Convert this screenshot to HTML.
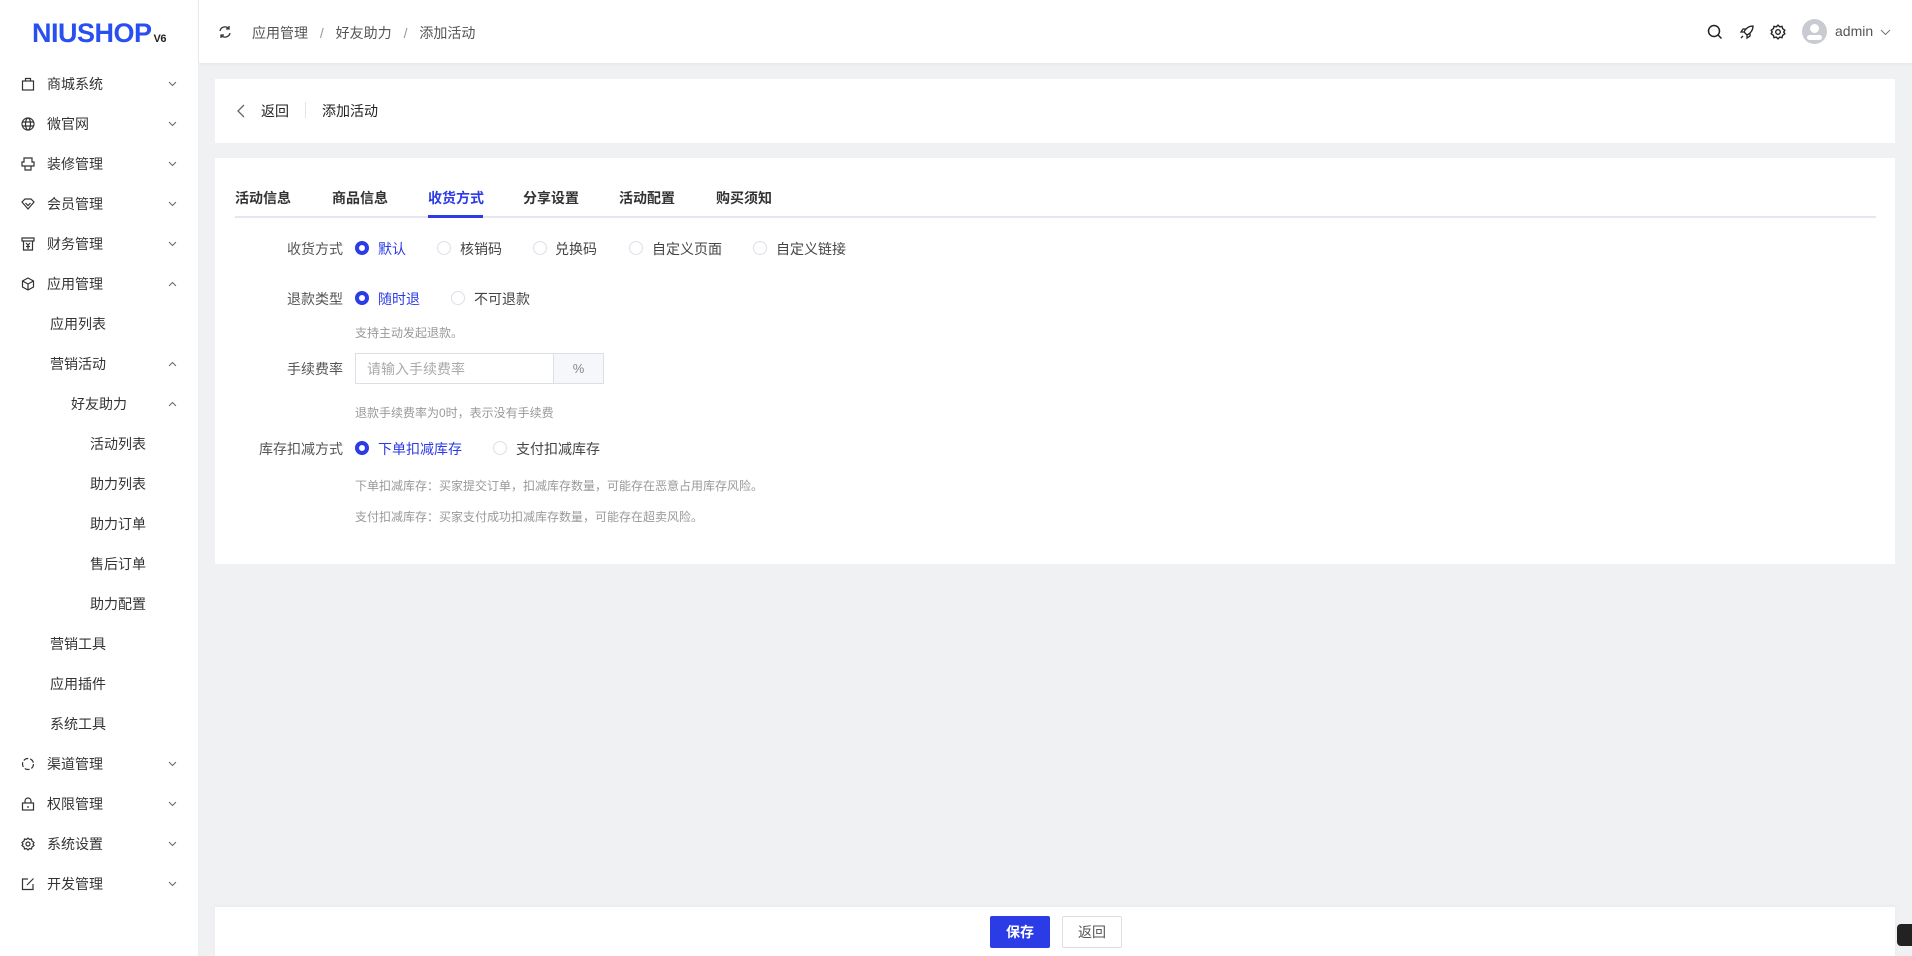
<!DOCTYPE html>
<html><head><meta charset="utf-8"><style>
*{box-sizing:border-box;margin:0;padding:0}
body{width:1912px;height:956px;background:#f0f1f3;font-family:"Liberation Sans","Noto Sans CJK SC",sans-serif;color:#333;position:relative;overflow:hidden;font-size:14px}
.abs{position:absolute}
.side{left:0;top:0;width:199px;height:956px;background:#fff;border-right:1px solid #eceef2}
.logo{left:32px;top:18px;font-size:27px;font-weight:bold;color:#2a4ff0;letter-spacing:-0.5px;font-family:"Liberation Sans",sans-serif}
.logo small{font-size:11px;color:#222;margin-left:2px}
.it{position:absolute;left:0;width:199px;height:40px;line-height:40px;font-size:14px;color:#333}
.it svg.ic{position:absolute;left:21px;top:13px}
.it .ch{position:absolute;left:168px;top:17px}
.hdr{left:199px;top:0;width:1713px;height:63px;background:#fff;box-shadow:0 1px 4px rgba(0,0,0,.05)}
.card{background:#fff;position:absolute;left:215px;width:1680px}
.lbl{position:absolute;width:200px;left:143px;text-align:right;font-size:14px;color:#555}
.rd{position:absolute;width:14px;height:14px;border-radius:50%;border:1px solid #dcdfe6;background:#fff}
.rd.on{border:4px solid #2b3be6}
.rt{position:absolute;font-size:14px;color:#444}
.rt.on{color:#2b3be6}
.hint{position:absolute;left:355px;font-size:12px;color:#999}
.tab{position:absolute;top:188px;font-size:14px;font-weight:bold;color:#333}
</style></head><body>
<div class="abs side">
<div class="abs logo">NIUSHOP<small>V6</small></div>
</div>
<!-- sidebar items -->
<div class="it" style="top:64px"><svg class="ic" width="14" height="14" viewBox="0 0 14 14" fill="none" stroke="#333" stroke-width="1.2"><rect x="1.5" y="4" width="11" height="9"/><path d="M4.5 4V1.5h5V4"/></svg><span style="margin-left:47px">商城系统</span><svg class="ch" width="9" height="6" viewBox="0 0 9 6" fill="none" stroke="#666"><path d="M1 1l3.5 3.5L8 1"/></svg></div>
<div class="it" style="top:104px"><svg class="ic" width="14" height="14" viewBox="0 0 14 14" fill="none" stroke="#333" stroke-width="1.2"><circle cx="7" cy="7" r="6"/><ellipse cx="7" cy="7" rx="2.5" ry="6"/><path d="M1 5h12M1 9h12"/></svg><span style="margin-left:47px">微官网</span><svg class="ch" width="9" height="6" viewBox="0 0 9 6" fill="none" stroke="#666"><path d="M1 1l3.5 3.5L8 1"/></svg></div>
<div class="it" style="top:144px"><svg class="ic" width="14" height="14" viewBox="0 0 14 14" fill="none" stroke="#333" stroke-width="1.2"><path d="M3 1h8v4h2v4H1V5h2zM4 9v4h6V9"/></svg><span style="margin-left:47px">装修管理</span><svg class="ch" width="9" height="6" viewBox="0 0 9 6" fill="none" stroke="#666"><path d="M1 1l3.5 3.5L8 1"/></svg></div>
<div class="it" style="top:184px"><svg class="ic" width="14" height="14" viewBox="0 0 14 14" fill="none" stroke="#333" stroke-width="1.2"><path d="M1 5l3-3h6l3 3-6 7z"/><path d="M4.5 6l2.5 2.5L9.5 6"/></svg><span style="margin-left:47px">会员管理</span><svg class="ch" width="9" height="6" viewBox="0 0 9 6" fill="none" stroke="#666"><path d="M1 1l3.5 3.5L8 1"/></svg></div>
<div class="it" style="top:224px"><svg class="ic" width="14" height="14" viewBox="0 0 14 14" fill="none" stroke="#333" stroke-width="1.2"><path d="M1 1h12v3H1zM2.5 4v9h9V4M5 6l2 2 2-2M7 8v4M5 9.5h4"/></svg><span style="margin-left:47px">财务管理</span><svg class="ch" width="9" height="6" viewBox="0 0 9 6" fill="none" stroke="#666"><path d="M1 1l3.5 3.5L8 1"/></svg></div>
<div class="it" style="top:264px"><svg class="ic" width="14" height="14" viewBox="0 0 14 14" fill="none" stroke="#333" stroke-width="1.2"><path d="M7 1l5.5 3v6L7 13 1.5 10V4z"/><path d="M1.5 4L7 7l5.5-3M7 7v6"/></svg><span style="margin-left:47px">应用管理</span><svg class="ch" width="9" height="6" viewBox="0 0 9 6" fill="none" stroke="#666"><path d="M1 5l3.5-3.5L8 5"/></svg></div>
<div class="it" style="top:304px"><span style="margin-left:50px">应用列表</span></div>
<div class="it" style="top:344px"><span style="margin-left:50px">营销活动</span><svg class="ch" width="9" height="6" viewBox="0 0 9 6" fill="none" stroke="#666"><path d="M1 5l3.5-3.5L8 5"/></svg></div>
<div class="it" style="top:384px"><span style="margin-left:71px">好友助力</span><svg class="ch" width="9" height="6" viewBox="0 0 9 6" fill="none" stroke="#666"><path d="M1 5l3.5-3.5L8 5"/></svg></div>
<div class="it" style="top:424px"><span style="margin-left:90px">活动列表</span></div>
<div class="it" style="top:464px"><span style="margin-left:90px">助力列表</span></div>
<div class="it" style="top:504px"><span style="margin-left:90px">助力订单</span></div>
<div class="it" style="top:544px"><span style="margin-left:90px">售后订单</span></div>
<div class="it" style="top:584px"><span style="margin-left:90px">助力配置</span></div>
<div class="it" style="top:624px"><span style="margin-left:50px">营销工具</span></div>
<div class="it" style="top:664px"><span style="margin-left:50px">应用插件</span></div>
<div class="it" style="top:704px"><span style="margin-left:50px">系统工具</span></div>
<div class="it" style="top:744px"><svg class="ic" width="14" height="14" viewBox="0 0 14 14" fill="none" stroke="#333" stroke-width="1.2" stroke-dasharray="5 2"><circle cx="7" cy="7" r="5.5"/></svg><span style="margin-left:47px">渠道管理</span><svg class="ch" width="9" height="6" viewBox="0 0 9 6" fill="none" stroke="#666"><path d="M1 1l3.5 3.5L8 1"/></svg></div>
<div class="it" style="top:784px"><svg class="ic" width="14" height="14" viewBox="0 0 14 14" fill="none" stroke="#333" stroke-width="1.2"><rect x="1.5" y="6" width="11" height="7"/><path d="M4 6V4a3 3 0 016 0v2M7 9v2"/></svg><span style="margin-left:47px">权限管理</span><svg class="ch" width="9" height="6" viewBox="0 0 9 6" fill="none" stroke="#666"><path d="M1 1l3.5 3.5L8 1"/></svg></div>
<div class="it" style="top:824px"><svg class="ic" width="14" height="14" viewBox="0 0 14 14" fill="none" stroke="#333" stroke-width="1.2"><circle cx="7" cy="7" r="2"/><path d="M7 1l1.5 1.5 2-.5.5 2L13 5.5 12 7l1 1.5-2 1.5-.5 2-2-.5L7 13l-1.5-1.5-2 .5-.5-2L1 8.5 2 7 1 5.5l2-1.5.5-2 2 .5z"/></svg><span style="margin-left:47px">系统设置</span><svg class="ch" width="9" height="6" viewBox="0 0 9 6" fill="none" stroke="#666"><path d="M1 1l3.5 3.5L8 1"/></svg></div>
<div class="it" style="top:864px"><svg class="ic" width="14" height="14" viewBox="0 0 14 14" fill="none" stroke="#333" stroke-width="1.2"><path d="M7 2H1.5v10.5H12V7M6 8l6.5-6.5"/></svg><span style="margin-left:47px">开发管理</span><svg class="ch" width="9" height="6" viewBox="0 0 9 6" fill="none" stroke="#666"><path d="M1 1l3.5 3.5L8 1"/></svg></div>

<!-- header -->
<div class="abs hdr"></div>
<svg class="abs" style="left:218px;top:25px" width="14" height="14" viewBox="0 0 14 14" fill="none" stroke="#333" stroke-width="1.3"><path d="M2 6a5 5 0 019-2M12 8a5 5 0 01-9 2M11 1v3H8M3 13v-3h3"/></svg>
<div class="abs" style="left:252px;top:23px;font-size:14px;color:#555">应用管理 <span style="color:#999;margin:0 8px">/</span> 好友助力 <span style="color:#999;margin:0 8px">/</span> 添加活动</div>
<svg class="abs" style="left:1707px;top:24px" width="16" height="16" viewBox="0 0 16 16" fill="none" stroke="#222" stroke-width="1.5"><circle cx="7" cy="7" r="5.5"/><path d="M11 11l3.5 3.5"/></svg>
<svg class="abs" style="left:1739px;top:24px" width="16" height="16" viewBox="0 0 16 16" fill="none" stroke="#222" stroke-width="1.3"><path d="M14 2c-4 0-7 2-9 6l3 3c4-2 6-5 6-9zM5 8H2l2-3h3M8 11v3l3-2V9M4 12l-2 2"/></svg>
<svg class="abs" style="left:1770px;top:24px" width="16" height="16" viewBox="0 0 14 14" fill="none" stroke="#222" stroke-width="1.2"><circle cx="7" cy="7" r="2"/><path d="M7 1l1.5 1.5 2-.5.5 2L13 5.5 12 7l1 1.5-2 1.5-.5 2-2-.5L7 13l-1.5-1.5-2 .5-.5-2L1 8.5 2 7 1 5.5l2-1.5.5-2 2 .5z"/></svg>
<div class="abs" style="left:1802px;top:19px;width:25px;height:25px;border-radius:50%;background:#c8cbd2;overflow:hidden"><div class="abs" style="left:8px;top:5px;width:9px;height:9px;border-radius:50%;background:#fff"></div><div class="abs" style="left:5px;top:16px;width:15px;height:5px;border-radius:3px;background:#fff"></div></div>
<div class="abs" style="left:1835px;top:23px;font-size:14px;color:#555">admin</div>
<svg class="abs" style="left:1880px;top:29px" width="11" height="7" viewBox="0 0 11 7" fill="none" stroke="#777"><path d="M1 1l4.5 4.5L10 1"/></svg>

<!-- card1 -->
<div class="card" style="top:79px;height:64px"></div>
<svg class="abs" style="left:237px;top:104px" width="8" height="14" viewBox="0 0 8 14" fill="none" stroke="#666" stroke-width="1.3"><path d="M7 1L1 7l6 6"/></svg>
<div class="abs" style="left:261px;top:101px;font-size:14px;color:#222">返回</div>
<div class="abs" style="left:305px;top:102px;width:1px;height:16px;background:#e2e4e8"></div>
<div class="abs" style="left:322px;top:101px;font-size:14px;color:#222">添加活动</div>

<!-- card2 -->
<div class="card" style="top:158px;height:406px"></div>
<div class="abs" style="left:235px;top:216px;width:1641px;height:2px;background:#e4e7ed"></div>
<div class="abs" style="left:428px;top:215px;width:55px;height:3px;background:#2b3be6"></div>
<div class="tab" style="left:235px">活动信息</div>
<div class="tab" style="left:332px">商品信息</div>
<div class="tab" style="left:428px;color:#2b3be6">收货方式</div>
<div class="tab" style="left:523px">分享设置</div>
<div class="tab" style="left:619px">活动配置</div>
<div class="tab" style="left:716px">购买须知</div>

<div class="lbl" style="top:239px">收货方式</div>
<div class="rd on" style="left:355px;top:241px"></div><div class="rt on" style="left:378px;top:239px">默认</div>
<div class="rd" style="left:437px;top:241px"></div><div class="rt" style="left:460px;top:239px">核销码</div>
<div class="rd" style="left:533px;top:241px"></div><div class="rt" style="left:555px;top:239px">兑换码</div>
<div class="rd" style="left:629px;top:241px"></div><div class="rt" style="left:652px;top:239px">自定义页面</div>
<div class="rd" style="left:753px;top:241px"></div><div class="rt" style="left:776px;top:239px">自定义链接</div>

<div class="lbl" style="top:289px">退款类型</div>
<div class="rd on" style="left:355px;top:291px"></div><div class="rt on" style="left:378px;top:289px">随时退</div>
<div class="rd" style="left:451px;top:291px"></div><div class="rt" style="left:474px;top:289px">不可退款</div>
<div class="hint" style="top:324px">支持主动发起退款。</div>

<div class="lbl" style="top:359px">手续费率</div>
<div class="abs" style="left:355px;top:353px;width:249px;height:31px;border:1px solid #dcdfe6;background:#fff"></div>
<div class="abs" style="left:553px;top:353px;width:51px;height:31px;border:1px solid #dcdfe6;background:#f5f7fa;text-align:center;line-height:29px;color:#888;font-size:13px">%</div>
<div class="abs" style="left:367px;top:359px;font-size:14px;color:#aaa">请输入手续费率</div>
<div class="hint" style="top:404px">退款手续费率为0时，表示没有手续费</div>

<div class="lbl" style="top:439px">库存扣减方式</div>
<div class="rd on" style="left:355px;top:441px"></div><div class="rt on" style="left:378px;top:439px">下单扣减库存</div>
<div class="rd" style="left:493px;top:441px"></div><div class="rt" style="left:516px;top:439px">支付扣减库存</div>
<div class="hint" style="top:477px">下单扣减库存：买家提交订单，扣减库存数量，可能存在恶意占用库存风险。</div>
<div class="hint" style="top:508px">支付扣减库存：买家支付成功扣减库存数量，可能存在超卖风险。</div>

<!-- bottom bar -->
<div class="card" style="top:907px;height:49px;box-shadow:0 -1px 4px rgba(0,0,0,.04)"></div>
<div class="abs" style="left:990px;top:916px;width:60px;height:32px;background:#2b3be6;border-radius:2px;color:#fff;font-weight:bold;text-align:center;line-height:32px;font-size:14px">保存</div>
<div class="abs" style="left:1062px;top:916px;width:60px;height:32px;background:#fff;border:1px solid #dcdfe6;border-radius:2px;color:#555;text-align:center;line-height:30px;font-size:14px">返回</div>
<div class="abs" style="left:1897px;top:924px;width:15px;height:22px;background:#222;border-radius:4px 0 0 4px"></div>
</body></html>
